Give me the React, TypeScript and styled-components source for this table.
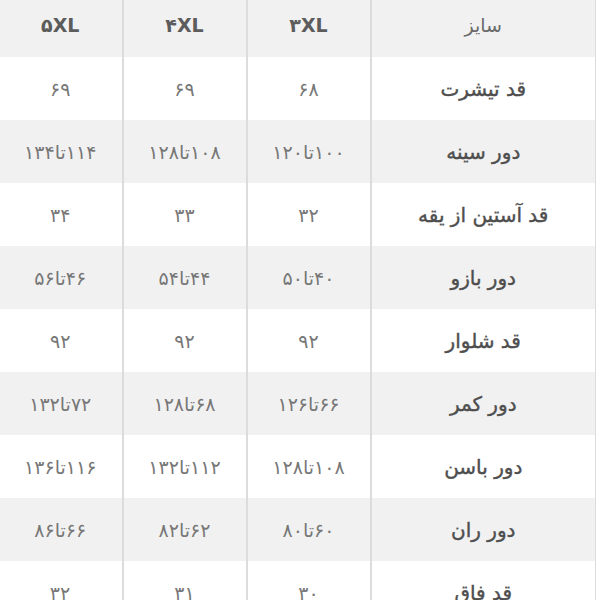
import styled, { createGlobalStyle } from "styled-components";

const GlobalStyle = createGlobalStyle`
  html, body {
    margin: 0;
    padding: 0;
    background: #ffffff;
    overflow: hidden;
  }
`;

interface SizeRow {
  label: string;
  values: string[];
}

const sizes = ["۳XL", "۴XL", "۵XL"];

const rows: SizeRow[] = [
  { label: "قد تیشرت", values: ["۶۸", "۶۹", "۶۹"] },
  { label: "دور سینه", values: ["۱۰۰تا۱۲۰", "۱۰۸تا۱۲۸", "۱۱۴تا۱۳۴"] },
  { label: "قد آستین از یقه", values: ["۳۲", "۳۳", "۳۴"] },
  { label: "دور بازو", values: ["۴۰تا۵۰", "۴۴تا۵۴", "۴۶تا۵۶"] },
  { label: "قد شلوار", values: ["۹۲", "۹۲", "۹۲"] },
  { label: "دور کمر", values: ["۶۶تا۱۲۶", "۶۸تا۱۲۸", "۷۲تا۱۳۲"] },
  { label: "دور باسن", values: ["۱۰۸تا۱۲۸", "۱۱۲تا۱۳۲", "۱۱۶تا۱۳۶"] },
  { label: "دور ران", values: ["۶۰تا۸۰", "۶۲تا۸۲", "۶۶تا۸۶"] },
  { label: "قد فاق", values: ["۳۰", "۳۱", "۳۲"] },
];

const App = () => {
  return (
    <>
      <GlobalStyle />
      <S.Table>
        <colgroup>
          <S.Col $width={225} />
          <S.Col $width={124} />
          <S.Col $width={124} />
          <S.Col $width={124} />
        </colgroup>
        <thead>
          <S.Row $striped>
            <S.HeadLabel>سایز</S.HeadLabel>
            {sizes.map((size) => (
              <S.HeadSize key={size}>{size}</S.HeadSize>
            ))}
          </S.Row>
        </thead>
        <tbody>
          {rows.map((row, index) => (
            <S.Row key={row.label} $striped={index % 2 === 1}>
              <S.Label>{row.label}</S.Label>
              {row.values.map((value, i) => (
                <S.Value key={i}>{value}</S.Value>
              ))}
            </S.Row>
          ))}
        </tbody>
      </S.Table>
    </>
  );
};

export default App;

const S = {
  Table: styled.table`
    direction: rtl;
    width: 597px;
    margin: -6px 0 0 -2px;
    border-collapse: collapse;
    table-layout: fixed;
    font-family: "DejaVu Sans", "Noto Sans", sans-serif;
  `,

  Col: styled.col<{ $width: number }>`
    width: ${({ $width }) => $width}px;
  `,

  Row: styled.tr<{ $striped?: boolean }>`
    height: 63px;
    background: ${({ $striped }) => ($striped ? "#f1f1f1" : "#ffffff")};
  `,

  HeadLabel: styled.th`
    border-right: 1px solid #dcdcdc;
    border-left: 2px solid #dcdcdc;
    text-align: center;
    font-size: 19px;
    font-weight: normal;
    color: #6a6a6a;
    padding: 0 0 2px;
  `,

  HeadSize: styled.th`
    border-left: 2px solid #dcdcdc;
    text-align: center;
    font-size: 19px;
    font-weight: bold;
    color: #5c5c5c;
    padding: 0 0 2px;

    &:last-child {
      border-left: none;
    }
  `,

  Label: styled.td`
    border-right: 1px solid #dcdcdc;
    border-left: 2px solid #dcdcdc;
    text-align: center;
    font-size: 20px;
    font-weight: normal;
    color: #4e4e4e;
    -webkit-text-stroke: 0.4px #4e4e4e;
  `,

  Value: styled.td`
    border-left: 2px solid #dcdcdc;
    text-align: center;
    font-size: 19px;
    color: #777777;

    &:last-child {
      border-left: none;
    }
  `,
};
